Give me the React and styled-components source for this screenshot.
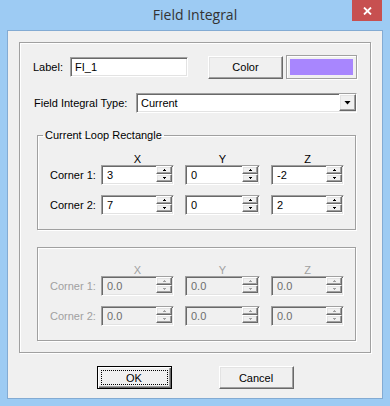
import React from 'react';
import styled, { createGlobalStyle, css } from 'styled-components';

const GlobalStyle = createGlobalStyle`
  * { box-sizing: border-box; }
  body { margin: 0; background: #fff; }
`;

const sunken = css`
  border: 1px solid;
  border-color: #a0a0a0 #fff #fff #a0a0a0;
  box-shadow: inset 1px 1px 0 #696969, inset -1px -1px 0 #e3e3e3;
`;

const raised = css`
  border: 1px solid;
  border-color: #fff #696969 #696969 #fff;
  box-shadow: inset -1px -1px 0 #a0a0a0, inset 1px 1px 0 #e3e3e3;
  background: #f0f0f0;
`;

const etched = css`
  border: 1px solid #a0a0a0;
  box-shadow: inset 1px 1px 0 #fff, 1px 1px 0 #fff;
`;

const coordColumns = css`
  display: grid;
  grid-template-columns: 40px 73px 75px 73px;
  column-gap: 11px;
`;

const Window = styled.div`
  width: 390px;
  height: 406px;
  background: #9dcbf3;
  display: flex;
  flex-direction: column;
  font-family: "Liberation Sans", Arial, sans-serif;
  font-size: 11px;
  color: #000;
`;

const TitleBar = styled.div`
  height: 30px;
  flex-shrink: 0;
  display: grid;
  grid-template-columns: 1fr auto 1fr;
`;

const Title = styled.div`
  grid-column: 2;
  font-family: "Open Sans", "Noto Sans", sans-serif;
  font-size: 14px;
  line-height: 29px;
  color: #333;
`;

const CloseButton = styled.div`
  grid-column: 3;
  justify-self: end;
  width: 30px;
  height: 21px;
  margin-right: 8px;
  background: #c75050;
  display: flex;
  align-items: center;
  justify-content: center;
`;

const Client = styled.div`
  flex: 1;
  margin: 0 7px 7px;
  border: 1px solid #83abd3;
  background: #f0f0f0;
  padding: 11px 11px 9px;
  display: flex;
  flex-direction: column;
`;

const Panel = styled.div`
  ${etched};
  padding: 12px 13px 11px;
  display: flex;
  flex-direction: column;
`;

const Row = styled.div`
  display: flex;
  align-items: center;
  height: ${p => p.$height}px;
  margin-top: ${p => p.$top || 0}px;
`;

const FieldLabel = styled.div`
  width: ${p => p.$width}px;
  padding-left: ${p => p.$indent || 0}px;
  white-space: nowrap;
`;

const TextBox = styled.div`
  ${sunken};
  width: ${p => p.$width}px;
  height: 20px;
  background: #fff;
  padding: 0 4px;
  line-height: 18px;
`;

const PushButton = styled.div`
  ${raised};
  width: 75px;
  height: 23px;
  margin-left: ${p => p.$left || 0}px;
  display: flex;
  align-items: center;
  justify-content: center;
`;

const Swatch = styled.div`
  ${etched};
  width: 71px;
  height: 24px;
  margin-left: 3px;
  padding: 3px;
`;

const SwatchFill = styled.div`
  height: 100%;
  background: ${p => p.$color};
`;

const Select = styled.div`
  ${sunken};
  width: 221px;
  height: 20px;
  background: #fff;
  display: flex;
  padding-left: 4px;
`;

const SelectValue = styled.div`
  flex: 1;
  line-height: 18px;
`;

const DropButton = styled.div`
  ${raised};
  width: 17px;
  height: 17px;
  display: flex;
  align-items: center;
  justify-content: center;

  &::after {
    content: "";
    width: 7px;
    height: 4px;
    background: #000;
    clip-path: polygon(0 0, 100% 0, 50% 100%);
  }
`;

const Group = styled.fieldset`
  ${etched};
  margin: ${p => p.$top}px 1px 0 4px;
  padding: ${p => (p.$legend ? 12 : 17)}px 11px 14px 12px;
  min-width: 0;
  color: ${p => (p.$disabled ? '#a0a0a0' : '#000')};
`;

const GroupLegend = styled.legend`
  margin-left: -7px;
  padding: 0 2px;
  line-height: 13px;
`;

const AxisRow = styled.div`
  ${coordColumns};
  height: 11px;
  line-height: 11px;
`;

const AxisLabel = styled.div`
  text-align: center;
`;

const CornerRow = styled.div`
  ${coordColumns};
  height: 20px;
  align-items: center;
  margin-top: ${p => p.$top}px;
`;

const CornerLabel = styled.span`
  white-space: nowrap;
`;

const SpinBox = styled.div`
  ${sunken};
  height: 20px;
  background: ${p => (p.$disabled ? '#f0f0f0' : '#fff')};
  color: ${p => (p.$disabled ? '#6d6d6d' : '#000')};
  display: flex;
  padding-right: 1px;
`;

const SpinValue = styled.div`
  flex: 1;
  padding-left: 5px;
  line-height: 18px;
`;

const SpinButtons = styled.div`
  width: 16px;
  height: 16px;
  display: flex;
  flex-direction: column;
`;

const SpinButton = styled.div`
  ${raised};
  height: 8px;
  display: flex;
  align-items: center;
  justify-content: center;

  &::after {
    content: "";
    width: 1px;
    height: 1px;
    background: ${p => p.$color};
    box-shadow: -1px ${p => (p.$down ? -1 : 1)}px 0 ${p => p.$color},
      0 ${p => (p.$down ? -1 : 1)}px 0 ${p => p.$color},
      1px ${p => (p.$down ? -1 : 1)}px 0 ${p => p.$color};
    transform: translateY(${p => (p.$down ? 0 : -1)}px);
  }
`;

const DialogButtons = styled.div`
  display: flex;
  justify-content: center;
  gap: 47px;
  margin-top: 13px;
`;

const DialogButton = styled.div`
  width: 75px;
  height: 23px;
  display: flex;
  ${p =>
    p.$default
      ? css`
          border: 1px solid #000;
          background: #f0f0f0;
          box-shadow: inset 1px 1px 0 #fff, inset -1px -1px 0 #696969,
            inset -2px -2px 0 #a0a0a0;
          padding: 3px;
        `
      : raised};
`;

const ButtonFace = styled.div`
  flex: 1;
  display: flex;
  align-items: center;
  justify-content: center;
  border: 1px dotted ${p => (p.$focus ? '#000' : 'transparent')};
`;

const Spin = ({ value, disabled }) => {
  const arrow = disabled ? '#a0a0a0' : '#000';
  return (
    <SpinBox $disabled={disabled}>
      <SpinValue>{value}</SpinValue>
      <SpinButtons>
        <SpinButton $color={arrow} />
        <SpinButton $color={arrow} $down />
      </SpinButtons>
    </SpinBox>
  );
};

const CoordGroup = ({ legend, corners, disabled, top }) => (
  <Group $legend={!!legend} $disabled={disabled} $top={top}>
    {legend ? <GroupLegend>{legend}</GroupLegend> : null}
    <AxisRow>
      <span />
      <AxisLabel>X</AxisLabel>
      <AxisLabel>Y</AxisLabel>
      <AxisLabel>Z</AxisLabel>
    </AxisRow>
    {corners.map((values, i) => (
      <CornerRow key={i} $top={i === 0 ? 0 : 10}>
        <CornerLabel>Corner {i + 1}:</CornerLabel>
        {values.map((v, j) => (
          <Spin key={j} value={v} disabled={disabled} />
        ))}
      </CornerRow>
    ))}
  </Group>
);

const App = () => {
  return (
    <Window>
      <GlobalStyle />
      <TitleBar>
        <Title>Field Integral</Title>
        <CloseButton>
          <svg width="9" height="8" viewBox="0 0 9 8">
            <path d="M1 0.5 L8 7.5 M8 0.5 L1 7.5" stroke="#fff" strokeWidth="1.8" />
          </svg>
        </CloseButton>
      </TitleBar>
      <Client>
        <Panel>
          <Row $height={24}>
            <FieldLabel $width={37}>Label:</FieldLabel>
            <TextBox $width={118}>FI_1</TextBox>
            <PushButton $left={20}>Color</PushButton>
            <Swatch>
              <SwatchFill $color="#a886fe" />
            </Swatch>
          </Row>
          <Row $height={20} $top={14}>
            <FieldLabel $width={103} $indent={1}>Field Integral Type:</FieldLabel>
            <Select>
              <SelectValue>Current</SelectValue>
              <DropButton />
            </Select>
          </Row>
          <CoordGroup
            legend="Current Loop Rectangle"
            top={16}
            corners={[['3', '0', '-2'], ['7', '0', '2']]}
          />
          <CoordGroup
            disabled
            top={17}
            corners={[['0.0', '0.0', '0.0'], ['0.0', '0.0', '0.0']]}
          />
        </Panel>
        <DialogButtons>
          <DialogButton $default>
            <ButtonFace $focus>OK</ButtonFace>
          </DialogButton>
          <DialogButton>
            <ButtonFace>Cancel</ButtonFace>
          </DialogButton>
        </DialogButtons>
      </Client>
    </Window>
  );
};

export default App;
